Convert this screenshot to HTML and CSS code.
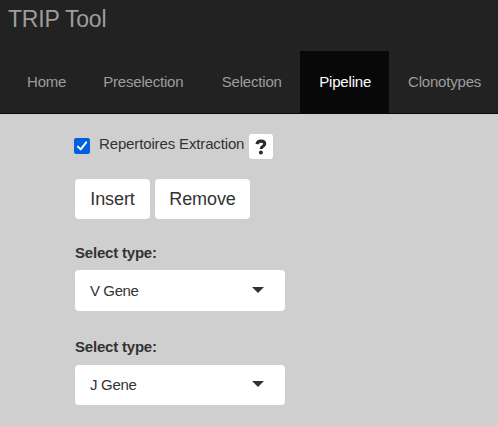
FILE: index.html
```
<!DOCTYPE html>
<html lang="en">
<head>
<meta charset="utf-8">
<title>TRIP Tool</title>
<link rel="stylesheet" href="styles.css">
</head>
<body>
<header class="navbar">
  <div class="brand">TRIP Tool</div>
  <nav class="tabs">
    <a class="tab">Home</a>
    <a class="tab">Preselection</a>
    <a class="tab">Selection</a>
    <a class="tab active">Pipeline</a>
    <a class="tab">Clonotypes</a>
  </nav>
</header>
<main class="content">
  <div class="option">
    <svg class="check" viewBox="0 0 16 16"><rect width="16" height="16" rx="2.2" fill="#0060df"/><path d="M3.9 8.6l2.8 2.8 5.5-7" fill="none" stroke="#fff" stroke-width="2" stroke-linecap="round" stroke-linejoin="round"/></svg>
    <span class="option-label">Repertoires Extraction</span>
    <button class="help"><svg viewBox="0 0 12 16"><path d="M1.9 5.2C2.4 3.1 3.8 2.1 5.9 2.1c2.4 0 3.8 1.1 3.8 2.8 0 2.4-3.6 2.3-3.6 5.2" fill="none" stroke="#2b2b2b" stroke-width="3.1"/><circle cx="5.9" cy="13.5" r="2" fill="#2b2b2b"/></svg></button>
  </div>
  <div class="actions">
    <button class="btn">Insert</button>
    <button class="btn remove">Remove</button>
  </div>
  <div class="field">
    <div class="label">Select type:</div>
    <div class="select"><span>V Gene</span><i class="caret"></i></div>
  </div>
  <div class="field second">
    <div class="label">Select type:</div>
    <div class="select"><span>J Gene</span><i class="caret"></i></div>
  </div>
</main>
</body>
</html>
```
FILE: styles.css
```
* { box-sizing: border-box; }
body {
  margin: 0;
  height: 426px;
  overflow: hidden;
  background: #cfcfcf;
  color: #333;
  font: 15px/21px "Liberation Sans", Arial, sans-serif;
  letter-spacing: -0.2px;
}
.navbar {
  height: 114px;
  background: #222;
  border-bottom: 1px solid #080808;
  color: #9d9d9d;
  overflow: hidden;
}
.brand {
  height: 51px;
  padding: 6px 0 0 8px;
  font-size: 23px;
  line-height: 26px;
  white-space: nowrap;
}
.tabs { display: flex; padding-left: 8px; }
.tab {
  flex: none;
  height: 62px;
  padding: 0 18.6px 0 19px;
  line-height: 62px;
}
.tab:first-child { padding-right: 18px; }
.tab:nth-child(2) { padding-right: 19.4px; }
.tab.active { padding-right: 18px; background: #080808; color: #fff; }
.content { padding: 19px 0 0 75px; }
.option { display: flex; height: 27px; }
.check { width: 16px; height: 16px; margin: 5px 9px 0 -1px; }
.option-label {
  width: 150px;
  line-height: 22px;
  white-space: nowrap;
  letter-spacing: -0.14px;
}
.help {
  width: 24px;
  height: 25px;
  margin-top: 1px;
  padding: 0;
  border: 0;
  border-radius: 3px;
  background: #fff;
  display: flex;
  align-items: center;
  justify-content: center;
}
.help svg { width: 12px; height: 16px; }
.actions { display: flex; gap: 5px; margin-top: 19px; }
.btn {
  width: 75px;
  height: 40px;
  padding: 0;
  border: 0;
  border-radius: 4px;
  background: #fff;
  color: #333;
  font: 18px "Liberation Sans", Arial, sans-serif;
  letter-spacing: -0.1px;
}
.btn.remove { width: 95px; }
.field { height: 94px; }
.actions + .field { margin-top: 23px; }
.label { font-weight: bold; line-height: 21px; margin-bottom: 7px; }
.select {
  width: 210px;
  height: 41px;
  padding: 0 21px 0 15px;
  border-radius: 4px;
  background: #fff;
  display: flex;
  align-items: center;
  justify-content: space-between;
  letter-spacing: -0.4px;
}
.second .label { margin-bottom: 8px; }
.second .select { height: 40px; letter-spacing: -0.3px; }
.second .select span { margin-bottom: 2px; }
.caret {
  border: 6px solid transparent;
  border-top-color: #333;
  border-bottom: 0;
  margin-bottom: 2px;
}
```
